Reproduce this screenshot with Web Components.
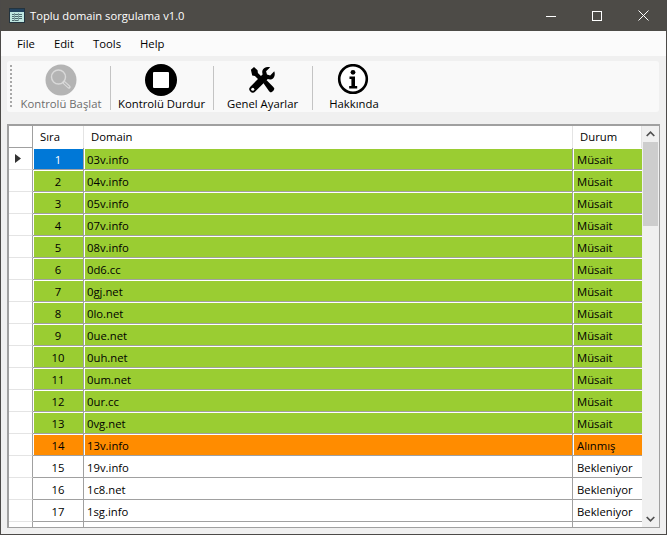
<!DOCTYPE html>
<html>
<head>
<meta charset="utf-8">
<title>Toplu domain sorgulama v1.0</title>
<style>
  html, body { margin: 0; height: 100%; }
  body { font: 11.3px "Open Sans", "Noto Sans", sans-serif; color: #000; overflow: hidden; }
</style>
</head>
<body>
<app-window>
  <title-bar slot="title">Toplu domain sorgulama v1.0</title-bar>
  <menu-bar slot="menu" items="File,Edit,Tools,Help"></menu-bar>
  <tool-strip slot="tools">
    <tool-button label="Kontrolü Başlat" icon="search" width="90" disabled></tool-button>
    <tool-sep></tool-sep>
    <tool-button label="Kontrolü Durdur" icon="stop" width="95"></tool-button>
    <tool-sep></tool-sep>
    <tool-button label="Genel Ayarlar" icon="tools" width="91"></tool-button>
    <tool-sep></tool-sep>
    <tool-button label="Hakkında" icon="info" width="76"></tool-button>
  </tool-strip>
  <domain-grid slot="grid"></domain-grid>
</app-window>

<script>
class AppWindow extends HTMLElement {
  constructor() {
    super();
    this.attachShadow({ mode: 'open' });
    this.shadowRoot.innerHTML = `
      <style>
        :host {
          display: flex;
          flex-direction: column;
          box-sizing: border-box;
          height: 535px;
          background: #f0f0f0;
          border-left: 1px solid #4c4a48;
          border-right: 1px solid #4c4a48;
          border-bottom: 1px solid #4c4a48;
        }
        .body { flex: 1; min-height: 0; display: flex; padding: 12px 0 6px 6px; }
      </style>
      <slot name="title"></slot>
      <slot name="menu"></slot>
      <slot name="tools"></slot>
      <div class="body"><slot name="grid"></slot></div>
    `;
  }
}

class TitleBar extends HTMLElement {
  constructor() {
    super();
    this.attachShadow({ mode: 'open' });
    this.shadowRoot.innerHTML = `
      <style>
        :host {
          display: flex;
          align-items: center;
          height: 31px;
          flex-shrink: 0;
          background: #4d4b47;
          color: #fff;
          font-size: 11.2px;
        }
        svg { display: block; }
        .app { margin: 0 5px 0 8px; }
        .text { flex: 1; white-space: nowrap; }
        .btn { width: 46px; height: 31px; display: flex; align-items: center; justify-content: center; }
      </style>
      <svg class="app" width="16" height="16" viewBox="0 0 16 16">
        <rect x="0.5" y="0.500" width="15" height="14" fill="#bfe6e0" stroke="#23343f"/>
        <rect x="1" y="1" width="14" height="3" fill="#23435f"/>
        <path d="M3 6.500h10M3 8.500h10M3 10.500h10M3 12.500h6" stroke="#4d6a6e"/>
        <path d="M5.500 5v8M9.500 5v8" stroke="#7f9ea0"/>
      </svg>
      <span class="text"><slot></slot></span>
      <div class="btn"><svg width="10" height="10"><path d="M0 5.500h10" stroke="#fff"/></svg></div>
      <div class="btn"><svg width="10" height="10"><rect x=".5" y=".5" width="9" height="9" fill="none" stroke="#fff"/></svg></div>
      <div class="btn"><svg width="11" height="11"><path d="M.5.5l10 10M10.500.5l-10 10" stroke="#fff"/></svg></div>
    `;
  }
}

class MenuBar extends HTMLElement {
  constructor() {
    super();
    this.attachShadow({ mode: 'open' });
    const items = this.getAttribute('items').split(',');
    this.shadowRoot.innerHTML = `
      <style>
        :host {
          display: flex;
          flex-shrink: 0;
          height: 25px;
          padding: 0 0 0 16px;
          box-sizing: border-box;
          align-items: center;
          background: #fbfbfb;
          gap: 19px;
        }
      </style>
      ${items.map(i => `<span>${i}</span>`).join('')}
    `;
  }
}

class ToolStrip extends HTMLElement {
  constructor() {
    super();
    this.attachShadow({ mode: 'open' });
    this.shadowRoot.innerHTML = `
      <style>
        :host {
          display: flex;
          flex-shrink: 0;
          height: 51px;
          margin: 5px 7px 0 6px;
          background: #f9f9f9;
          border-radius: 3px;
        }
        .grip {
          width: 2px;
          margin: 4px 4px 5px 3px;
          background: repeating-linear-gradient(#a8a8a8 0 2px, transparent 2px 4px);
        }
      </style>
      <div class="grip"></div>
      <slot></slot>
    `;
  }
}

const TOOL_ICONS = {
  search: `<svg width="32" height="32" viewBox="0 0 32 32">
      <circle cx="16" cy="16" r="15.500" fill="#b4b4b4"/>
      <circle cx="13.500" cy="13" r="7" fill="none" stroke="#d9d9d9" stroke-width="1.400"/>
      <path d="M19 18.500l5 4.500" stroke="#d9d9d9" stroke-width="3.400" stroke-linecap="round"/>
      <path d="M19.500 19l4 3.600" stroke="#b4b4b4" stroke-width="1.200" stroke-linecap="round"/>
    </svg>`,
  stop: `<svg width="32" height="32" viewBox="0 0 32 32">
      <circle cx="16" cy="16" r="16" fill="#000"/>
      <rect x="8" y="8" width="16" height="16" rx="1" fill="#fff"/>
    </svg>`,
  tools: `<svg width="32" height="32" viewBox="-2 -2 36 36">
      <path d="M3.500 4.500L7 1.500l4 3.500.4 3 4.600 4.600-3.400 3.400L8 11.400l-3-.4z" fill="#000"/>
      <path d="M29.800 6.200l-4.600 4.600-3.600-1-1-3.600 4.600-4.500C21 .6 17.600 2.200 16.600 5c-.6 1.600-.4 3.200.2 4.500L2.900 23.500a3.900 3.900 0 0 0 0 5.500 3.900 3.900 0 0 0 5.500 0L22.500 15c1.400.6 3 .7 4.500.2 2.900-1 4.200-5.200 2.800-9z" fill="#000"/>
      <path d="M17.500 19.500l3.500-3.500 8 8.200a2.500 2.500 0 0 1 0 3.600l-1.200 1.200a2.500 2.500 0 0 1-3.600 0z" fill="#000"/>
      <circle cx="5.600" cy="26.300" r="1.700" fill="#fff"/>
    </svg>`,
  info: `<svg width="32" height="32" viewBox="0 0 32 32">
      <circle cx="16" cy="15" r="13.800" fill="#fff" stroke="#000" stroke-width="2.600"/>
      <circle cx="16" cy="8.300" r="2.400" fill="#000"/>
      <path d="M12.500 12.500h5.500v9.500h2.200v2.400h-8V22h2.200v-7.100h-1.900z" fill="#000"/>
    </svg>`
};

class ToolButton extends HTMLElement {
  constructor() {
    super();
    this.attachShadow({ mode: 'open' });
    const disabled = this.hasAttribute('disabled');
    this.shadowRoot.innerHTML = `
      <style>
        :host {
          display: flex;
          flex-direction: column;
          align-items: center;
          box-sizing: border-box;
          width: ${this.getAttribute('width')}px;
          height: 51px;
          padding-top: 3px;
          white-space: nowrap;
          color: ${disabled ? '#6d6d6d' : '#000'};
        }
        svg { display: block; margin-right: ${disabled ? 0 : 2}px; }
        .label { line-height: 16px; }
      </style>
      ${TOOL_ICONS[this.getAttribute('icon')]}
      <span class="label">${this.getAttribute('label')}</span>
    `;
  }
}

class ToolSep extends HTMLElement {
  constructor() {
    super();
    this.attachShadow({ mode: 'open' });
    this.shadowRoot.innerHTML = `
      <style>
        :host { display: block; width: 1px; margin: 5px 3px 2px 4px; background: #c4c4c4; }
      </style>
    `;
  }
}

const DOMAINS = ['03v.info','04v.info','05v.info','07v.info','08v.info','0d6.cc','0gj.net','0lo.net','0ue.net','0uh.net','0um.net','0ur.cc','0vg.net','13v.info','19v.info','1c8.net','1sg.info',''];

class DomainRow extends HTMLElement {
  constructor() {
    super();
    this.attachShadow({ mode: 'open' });
  }
  connectedCallback() { this.render(); }
  render() {
    const state = this.getAttribute('state') || 'wait';
    const bg = { free: '#9acd32', taken: '#ff8c00', wait: '#fff' }[state];
    const current = this.hasAttribute('current');
    const lit = state === 'wait' ? '' : 'lit';
    this.shadowRoot.innerHTML = `
      <style>
        :host {
          display: grid;
          grid-template-columns: 24px 51px 489px 69px;
          height: 22px;
          flex-shrink: 0;
        }
        .c {
          box-sizing: border-box;
          height: 22px;
          line-height: 23px;
          padding: 0 3px;
          background: ${bg};
          background-clip: padding-box;
          border-right: 1px solid #a0a0a0;
          border-bottom: 1px solid #a0a0a0;
          white-space: nowrap;
          overflow: hidden;
        }
        .head {
          background: #fff;
          display: flex;
          align-items: center;
          padding: 0 0 0 6px;
          border-bottom: 1px solid #e4e4e4;
        }
        .no { text-align: center; }
        .no.cur { background: #0078d7; color: #fff; }
        .last { padding-left: 4px; border-right: 0; }
        .lit { box-shadow: inset 1px 1px 0 #fff; }
      </style>
      <div class="c head">${current ? '<svg width="6" height="9"><path d="M0 0l6 4.500-6 4.500z" fill="#333"/></svg>' : ''}</div>
      <div class="c no ${current ? 'cur' : ''} ${lit}">${this.getAttribute('no')}</div>
      <div class="c ${lit}">${this.getAttribute('domain')}</div>
      <div class="c last ${lit}">${this.getAttribute('status')}</div>
    `;
  }
}

class DomainGrid extends HTMLElement {
  constructor() {
    super();
    this.attachShadow({ mode: 'open' });
    this.shadowRoot.innerHTML = `
      <style>
        :host {
          display: flex;
          box-sizing: border-box;
          width: 653px;
          border: 1px solid #a0a0a0;
          border-top-width: 2px;
          border-left-width: 2px;
          background: #f0f0f0;
        }
        .table { width: 633px; display: flex; flex-direction: column; overflow: hidden; background: #fff; }
        .header {
          display: grid;
          grid-template-columns: 24px 51px 489px 69px;
          height: 22px;
          flex-shrink: 0;
          background: #fff;
        }
        .header div {
          box-sizing: border-box;
          line-height: 21px;
          padding-left: 7px;
          border-right: 1px solid #e4e4e4;
        }
        .header div:first-child { border-right-color: #a0a0a0; border-bottom: 1px solid #a0a0a0; }
        .bar {
          width: 17px;
          display: flex;
          flex-direction: column;
          align-items: center;
          background: #f0f0f0;
        }
        .arrow { height: 17px; display: flex; align-items: center; justify-content: center; flex-shrink: 0; }
        .up { height: 16px; }
        .thumb { width: 15px; height: 84px; background: #cdcdcd; flex-shrink: 0; }
        .track { flex: 1; }
      </style>
      <div class="table">
        <div class="header"><div></div><div>Sıra</div><div>Domain</div><div>Durum</div></div>
        <slot></slot>
      </div>
      <div class="bar">
        <div class="arrow up"><svg width="9" height="6"><path d="M.7 5L4.500 1.200 8.300 5" fill="none" stroke="#505050" stroke-width="1.700"/></svg></div>
        <div class="thumb"></div>
        <div class="track"></div>
        <div class="arrow"><svg width="9" height="6"><path d="M.7 1L4.500 4.800 8.300 1" fill="none" stroke="#505050" stroke-width="1.700"/></svg></div>
      </div>
    `;
  }
  connectedCallback() {
    DOMAINS.forEach((d, i) => {
      const row = document.createElement('domain-row');
      const n = i + 1;
      row.setAttribute('no', d ? n : '');
      row.setAttribute('domain', d);
      row.setAttribute('status', n < 14 ? 'Müsait' : n === 14 ? 'Alınmış' : d ? 'Bekleniyor' : '');
      row.setAttribute('state', n < 14 ? 'free' : n === 14 ? 'taken' : 'wait');
      if (n === 1) row.setAttribute('current', '');
      this.appendChild(row);
    });
  }
}

customElements.define('app-window', AppWindow);
customElements.define('title-bar', TitleBar);
customElements.define('menu-bar', MenuBar);
customElements.define('tool-strip', ToolStrip);
customElements.define('tool-sep', ToolSep);
customElements.define('tool-button', ToolButton);
customElements.define('domain-row', DomainRow);
customElements.define('domain-grid', DomainGrid);
</script>
</body>
</html>
